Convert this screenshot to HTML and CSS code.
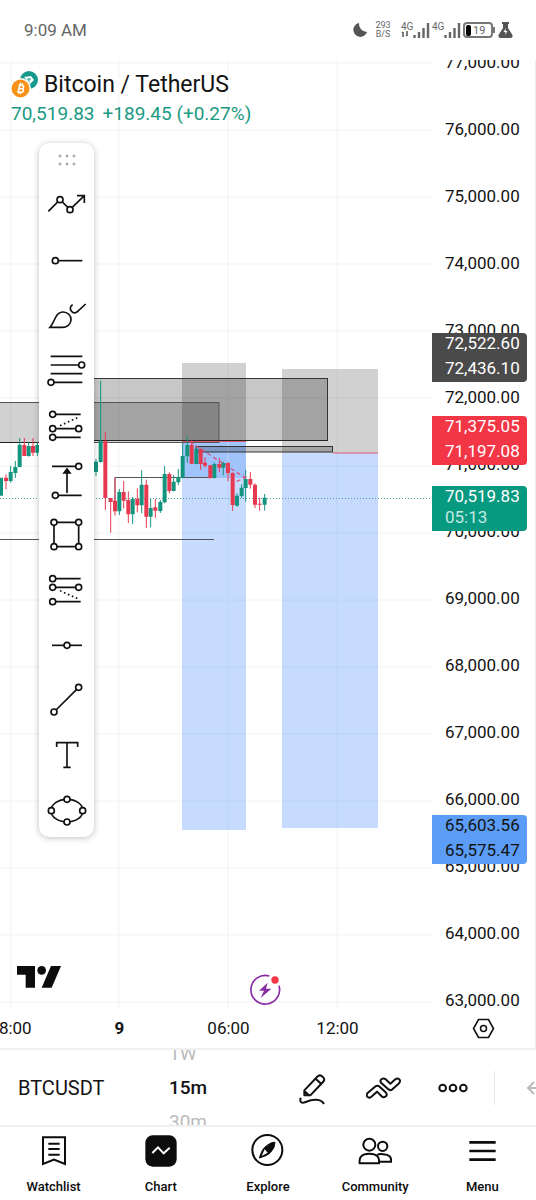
FILE: index.html
```
<!DOCTYPE html>
<html lang="en">
<head>
  <meta charset="UTF-8" />
  <meta name="viewport" content="width=device-width, initial-scale=1.0"/>
  <title>Bitcoin / TetherUS</title>
  <link rel="stylesheet" href="styles.css">
</head>
<body>

  <header class="status">
    <span class="clock">9:09 AM</span>
    <div class="status-icons">
      <svg class="moon" width="15" height="16" viewBox="0 0 15 16"><path d="M6 1A7 7 0 1 0 14 10 8 8 0 0 1 6 1Z" fill="#555"/></svg>
      <span class="speed">293<br>B/S</span>
      <div class="signal">
        <div class="net">4G<svg width="8" height="6" viewBox="0 0 8 6"><path d="M2 6V1M1 2L2 1M6 0V5M5 4L6 5" stroke="#555" stroke-width="1.500" fill="none"/></svg></div>
        <svg width="17" height="16" viewBox="0 0 17 16"><path d="M1.500 13V16M6 10V16M10.500 6V16M15 1V16" stroke="#666" stroke-width="2.400"/></svg>
      </div>
      <div class="signal">
        <div class="net">4G</div>
        <svg width="17" height="16" viewBox="0 0 17 16"><path d="M1.500 13V16M6 10V16M10.500 6V16M15 1V16" stroke="#666" stroke-width="2.400"/></svg>
      </div>
      <div class="battery"><i></i>19</div>
      <svg class="flask" width="15" height="16" viewBox="0 0 15 16"><path d="M4 0H11V2H10V6L14.500 13Q15 16 12.500 16H2.500Q0 16 .5 13L5 6V2H4Z" fill="#555"/><path d="M8 6L5.500 10H7.500L7 13L9.500 9H7.500Z" fill="#fff"/></svg>
    </div>
  </header>

  <main class="chart">
    <div class="plot">
      <svg class="candles" viewBox="0 60 432 948" preserveAspectRatio="none">
        <!-- grid -->
        <path class="grid" d="M0 63H432M0 130H432M0 197H432M0 264H432M0 331H432M0 398H432M0 466H432M0 533H432M0 600H432M0 667H432M0 734H432M0 801H432M0 868H432M0 935H432M0 1002H432M11 60V1008M119 60V1008M228 60V1008M337 60V1008"/>

        <!-- short positions -->
        <rect x="182" y="441" width="64" height="389" fill="#c6dbfd"/>
        <rect x="182" y="441" width="64" height="37" fill="#a0c3fb"/>
        <rect x="282" y="453" width="96" height="375" fill="#c6dbfd"/>
        <path class="grid shade" d="M182 533H246M182 600H246M182 667H246M182 734H246M182 801H246M282 466H378M282 533H378M282 600H378M282 667H378M282 734H378M282 801H378M228 441V830M337 453V828"/>
        <rect x="182" y="363" width="64" height="78" fill="#000" opacity=".18"/>
        <rect x="282" y="369" width="96" height="84" fill="#000" opacity=".18"/>

        <!-- supply zones -->
        <g class="zone">
          <rect x="60" y="378.500" width="267.500" height="62"/>
          <rect class="inner" x="-2" y="402.500" width="221" height="40"/>
          <rect x="196" y="446.500" width="136.500" height="5.500"/>
        </g>
        <path d="M0 442.500H94M60 440.500H327" stroke="#222"/>
        <path d="M182 441.500H246M333 453H378" stroke="#e0566a"/>
        <path d="M0 539.500H214M115 505V477.500H212" stroke="#555" fill="none"/>
        <path d="M0 498.500H432" stroke="#4aa39a" stroke-dasharray="1 2"/>

        <g transform="translate(0 360) scale(.3333)">
          <path class="up wick" d="M32 318V368M46 303V354M59 234V322M86 247V290M112 247V288"/>
          <path class="up body" d="M3 353V407M32 336V363M46 321V339M59 254V321M86 258V288M112 255V278"/>
          <path class="down wick" d="M18 343V388M73 234V288M99 234V288"/>
          <path class="down body" d="M18 353V363M73 255V288M99 258V278"/>
        </g>
        <g transform="translate(90 350) scale(.3333)">
          <path class="up wick" d="M18 327V378M32 92V338M88 417V495M128 441V522M155 361V490M182 446V532M211 450V489M224 348V460M251 375V424M265 357V405M278 278V385M292 257V338M319 292V343M373 337V386M400 335V376M441 430V470M455 403V444M467 359V455M524 432V482"/>
          <path class="up body" d="M18 335V366M32 274V336M88 426V484M128 446V493M155 404V466M182 474V500M211 456V483M224 372V457M251 395V423M265 382V397M278 318V383M292 285V319M319 297V342M373 342V384M400 339V353M441 437V467M455 413V438M467 387V414M524 443V464"/>
          <path class="down wick" d="M46 247V480M62 444V548M75 383V497M101 393V475M115 424V519M142 415V487M169 389V534M196 447V504M238 367V430M305 271V342M332 295V360M345 322V353M361 346V386M388 324V366M414 337V394M428 367V483M481 366V416M495 400V474M509 443V482"/>
          <path class="down body" d="M46 274V444M62 444V456M75 452V484M101 426V452M115 450V493M142 446V466M169 404V500M196 472V482M238 372V423M305 285V341M332 297V342M345 338V347M361 346V384M388 342V353M414 339V369M428 369V465M481 387V404M495 404V464M509 461V464"/>
          <path d="M300 275L360 315L465 383M440 394L468 382L460 372" stroke="#d9507a" stroke-width="4" stroke-dasharray="12 9" fill="none"/>
        </g>
      </svg>

      <div class="legend">
        <h1>
          <svg width="28" height="28" viewBox="0 0 28 28">
            <circle cx="18" cy="9" r="9" fill="#159a8c"/>
            <path d="M13 6L20 5L23 9L19 13Z" fill="#fff"/><path d="M16 8H20M18 8V11" stroke="#159a8c"/>
            <circle cx="9.500" cy="17.500" r="10.500" fill="#fff"/>
            <circle cx="9.500" cy="17.500" r="9" fill="#f7931a"/>
            <g transform="rotate(12 9.500 17.500)" stroke="#fff" stroke-width="1.500" fill="none"><path d="M7 14H10.500A1.700 1.700 0 0 1 10.500 17.500H7.500H11A1.700 1.700 0 0 1 11 21H7M8 14V21M8.500 12V14M10.500 12V14M8.500 21V23M10.500 21V23"/></g>
          </svg>
          Bitcoin / TetherUS
        </h1>
        <p><span>70,519.83</span><span>+189.45 (+0.27%)</span></p>
      </div>

      <svg class="brand" width="44" height="22" viewBox="0 0 132 66"><path d="M0 0H54V65H26V26H0ZM102 0H132L104 65H74Z" fill="#0c0c0c"/><circle cx="74" cy="13" r="13" fill="#0c0c0c"/></svg>
      <button class="flash" aria-label="Events">
        <svg width="32" height="32" viewBox="0 0 96 96"><path d="M61 6A43 43 0 1 0 90 35" stroke="#8a2da5" stroke-width="5" fill="none"/><path d="M56 26L30 50H45L35 72L67 44H51Z" fill="#8a2da5"/><circle cx="78" cy="18" r="11" fill="#f23645"/></svg>
      </button>
    </div>

    <div class="prices">
      <ul>
        <li>77,000.00</li>
        <li>76,000.00</li>
        <li>75,000.00</li>
        <li>74,000.00</li>
        <li>73,000.00</li>
        <li>72,000.00</li>
        <li>71,000.00</li>
        <li>70,000.00</li>
        <li>69,000.00</li>
        <li>68,000.00</li>
        <li>67,000.00</li>
        <li>66,000.00</li>
        <li>65,000.00</li>
        <li>64,000.00</li>
        <li>63,000.00</li>
      </ul>
      <div class="tag stop"><span>72,522.60</span><span>72,436.10</span></div>
      <div class="tag entry"><span>71,375.05</span><span>71,197.08</span></div>
      <div class="tag last"><span>70,519.83</span><span>05:13</span></div>
      <div class="tag target"><span>65,603.56</span><span>65,575.47</span></div>
    </div>

    <div class="times">
      <span>18:00</span>
      <span><b>9</b></span>
      <span>06:00</span>
      <span>12:00</span>
    </div>
    <button class="settings" aria-label="Chart settings">
      <svg width="23" height="21" viewBox="0 0 23 21"><path d="M6.500 1.500H16.500L21.500 10.500L16.500 19.500H6.500L1.500 10.500Z" fill="none" stroke="#111" stroke-width="1.600"/><circle cx="11.500" cy="10.500" r="3" fill="none" stroke="#111" stroke-width="1.500"/></svg>
    </button>

    <div class="toolbar">
      <div class="handle"><svg width="20" height="12" viewBox="0 0 20 12" fill="#aaa"><circle cx="3" cy="2" r="1.400"/><circle cx="10" cy="2" r="1.400"/><circle cx="17" cy="2" r="1.400"/><circle cx="3" cy="10" r="1.400"/><circle cx="10" cy="10" r="1.400"/><circle cx="17" cy="10" r="1.400"/></svg></div>
      <button aria-label="Trend arrow"><svg viewBox="0 0 165 165"><path d="M28 103L63 68L93 98L136 56M114 56H136V78"/><circle cx="63" cy="68" r="9"/><circle cx="93" cy="98" r="9"/></svg></button>
      <button aria-label="Horizontal ray"><svg viewBox="0 0 165 165"><path d="M49 86H130"/><circle cx="49" cy="86" r="9"/></svg></button>
      <button aria-label="Brush"><svg viewBox="0 0 165 165"><path d="M33 121C48 105 48 77 70 75C86 74 97 86 96 99C95 112 84 121 70 121ZM101 53C93 58 92 66 97 72C103 80 110 79 116 73L140 51"/></svg></button>
      <button aria-label="Fib retracement"><svg viewBox="0 0 165 165"><path d="M35 43H130M35 69H128M35 95H130M36 121H130"/><circle cx="128" cy="69" r="9"/><circle cx="36" cy="121" r="9"/></svg></button>
      <button aria-label="Long position"><svg viewBox="0 0 165 165"><path d="M41 52H125M41 95H119M41 121H125"/><path class="dots" d="M63 86L120 60"/><circle cx="41" cy="52" r="9"/><circle cx="41" cy="95" r="9"/><circle cx="119" cy="95" r="9"/><circle cx="41" cy="121" r="9"/></svg></button>
      <button aria-label="Price range"><svg viewBox="0 0 165 165"><path d="M39 43H119M49 130H128M84 123V56"/><path class="fill" d="M84 51L75 63H93Z"/><circle cx="119" cy="43" r="9"/><circle cx="49" cy="130" r="9"/></svg></button>
      <button aria-label="Rectangle"><svg viewBox="0 0 165 165"><path d="M45 46H119V119H45Z"/><circle cx="45" cy="46" r="9"/><circle cx="119" cy="46" r="9"/><circle cx="45" cy="119" r="9"/><circle cx="119" cy="119" r="9"/></svg></button>
      <button aria-label="Short position"><svg viewBox="0 0 165 165"><path d="M41 50H125M41 76H119M41 119H125"/><path class="dots" d="M63 86L120 112"/><circle cx="41" cy="50" r="9"/><circle cx="41" cy="76" r="9"/><circle cx="119" cy="76" r="9"/><circle cx="41" cy="119" r="9"/></svg></button>
      <button aria-label="Horizontal line"><svg viewBox="0 0 165 165"><path d="M39 85H129"/><circle cx="84" cy="85" r="9"/></svg></button>
      <button aria-label="Trend line"><svg viewBox="0 0 165 165"><path d="M45 120L119 46"/><circle cx="45" cy="120" r="9"/><circle cx="119" cy="46" r="9"/></svg></button>
      <button aria-label="Text"><svg viewBox="0 0 165 165"><path d="M53 60V47H116V60M84 47V121M73 121H95"/></svg></button>
      <button aria-label="Ellipse"><svg viewBox="0 0 165 165"><ellipse cx="84" cy="86" rx="48" ry="34"/><circle cx="37" cy="86" r="9"/><circle cx="84" cy="52" r="9"/><circle cx="131" cy="86" r="9"/><circle cx="84" cy="120" r="9"/></svg></button>
    </div>
  </main>

  <div class="controls">
    <button class="symbol">BTCUSDT</button>
    <div class="interval">
      <button>1W</button>
      <button class="current">15m</button>
      <button>30m</button>
    </div>
    <div class="tools">
      <button aria-label="Draw"><svg width="28" height="34" viewBox="0 0 84 102"><path d="M16 58L54 18Q62 9 71 17T72 33L34 73H16ZM50 23L67 39M16 60L32 74M5 80C1 94 8 98 20 93C43 83 66 83 75 99"/></svg></button>
      <button aria-label="Indicators"><svg width="35" height="22" viewBox="0 0 105 66"><path d="M4 49L27 29Q34 23 41 29L58 45Q67 54 58 59Q52 63 46 57L33 44L16 59Q9 65 4 59Q0 54 4 49ZM45 17Q41 10 47 6T59 7L73 20L88 7Q95 2 100 7T98 20L79 37Q72 42 66 36Z"/></svg></button>
      <button aria-label="More"><svg width="30" height="12" viewBox="0 0 90 36"><circle cx="14" cy="18" r="10"/><circle cx="45" cy="18" r="10"/><circle cx="76" cy="18" r="10"/></svg></button>
    </div>
    <button class="undo" aria-label="Undo"><svg width="20" height="14" viewBox="0 0 20 14"><path d="M9 1L3 7L9 13M3 7H20" fill="none" stroke="#bbb" stroke-width="2"/></svg></button>
  </div>

  <nav class="tabs">
    <a href="#"><svg viewBox="0 0 108 108"><path d="M21 13H87V93L54 80L21 93Z"/><path d="M37 32H71M37 48H71M37 65H71"/></svg>Watchlist</a>
    <a href="#"><svg viewBox="0 0 108 108"><rect x="7" y="7" width="94" height="94" rx="22" fill="#0c0c0c" stroke="none"/><path d="M28 60L45 43L62 61L80 44" stroke="#fff"/></svg>Chart</a>
    <a href="#"><svg viewBox="0 0 108 108"><circle cx="52" cy="51" r="45"/><path d="M75 28Q66 26 50 38Q37 45 28 75Q51 69 61 59Q75 45 75 28Z" fill="#0c0c0c" stroke-width="3"/><path d="M44 49L53 59L35 69Z" fill="#fff" stroke="none"/></svg>Explore</a>
    <a href="#"><svg viewBox="0 0 108 108"><circle cx="37" cy="35" r="18"/><circle cx="77" cy="40" r="14"/><path d="M8 91Q4 62 37 62T66 91ZM61 65Q70 62 79 64Q105 65 102 86H66"/></svg>Community</a>
    <a href="#"><svg viewBox="0 0 108 108"><path d="M16 28H95M16 54H95M16 80H95" stroke-width="8"/></svg>Menu</a>
  </nav>

</body>
</html>
```

FILE: styles.css
```
* {
  box-sizing: border-box;
}

body {
  display: flex;
  flex-direction: column;
  min-height: 100vh;
  margin: 0;
  background-color: #fff;
  color: #131313;
  font-family: Roboto, sans-serif;
  font-size: 17px;
}

button {
  padding: 0;
  border: none;
  background: none;
  color: inherit;
  font: inherit;
  cursor: pointer;
}

svg {
  display: block;
  flex: none;
}

/* status bar */
.status {
  display: flex;
  align-items: center;
  justify-content: space-between;
  height: 60px;
  padding: 0 23px 0 24px;
  color: #666;
}

.status-icons {
  display: flex;
  align-items: center;
}

.speed {
  width: 18px;
  margin: 0 9px 0 6px;
  font-size: 9px;
  line-height: 9px;
  text-align: center;
}

.signal {
  display: flex;
  align-items: flex-start;
  margin-right: 2px;
}

.net {
  width: 12px;
  height: 16px;
  font-size: 10px;
  line-height: 9px;
}

.battery {
  display: flex;
  align-items: center;
  position: relative;
  width: 30px;
  height: 16px;
  margin-right: 5px;
  padding: 1px;
  border: 2px solid #777;
  border-radius: 4px;
  font-size: 11px;
}

.battery i {
  width: 5px;
  height: 11px;
  margin-right: 2px;
  border-radius: 2px;
  background-color: #000;
}

.battery::after {
  content: "";
  position: absolute;
  top: 3px;
  right: -4px;
  width: 2px;
  height: 6px;
  background-color: #777;
}

/* chart */
.chart {
  display: grid;
  flex: 1;
  grid-template-columns: 1fr 103px;
  grid-template-rows: 1fr 40px;
  position: relative;
  overflow: hidden;
  border-right: 1px solid #eee;
}

.plot {
  position: relative;
  min-height: 948px;
}

.candles {
  position: absolute;
  width: 100%;
  height: 100%;
}

.grid {
  fill: none;
  stroke: #f3f3f3;
}

.shade {
  stroke: #bcd3f8;
}

.zone rect {
  fill: rgba(0, 0, 0, 0.22);
  stroke: #333;
}

.zone .inner {
  fill: rgba(0, 0, 0, 0.18);
  stroke: #555;
}

.wick {
  stroke-width: 3;
}

.body {
  stroke-width: 12;
}

.up {
  stroke: #13947f;
}

.down {
  stroke: #e63950;
}

.legend {
  position: absolute;
  top: 9px;
  left: 11px;
}

.legend h1 {
  display: flex;
  align-items: center;
  gap: 5px;
  margin: 0;
  font-size: 23px;
  font-weight: 400;
  line-height: 32px;
}

.legend p {
  display: flex;
  gap: 8px;
  margin: 3px 0;
  color: #1a9a82;
  font-size: 19px;
  line-height: 20px;
}

.brand {
  position: absolute;
  bottom: 20px;
  left: 17px;
}

.flash {
  position: absolute;
  bottom: 2px;
  left: 249px;
}

.prices {
  position: relative;
  overflow: hidden;
}

.prices ul {
  margin: -31px 0 0;
  padding: 0 0 0 13px;
  list-style: none;
}

.prices li {
  height: 67px;
  line-height: 67px;
}

.prices li:last-child {
  margin-bottom: -40px;
}

.tag {
  display: flex;
  flex-direction: column;
  gap: 5px;
  position: absolute;
  left: 0;
  width: 95px;
  height: 49px;
  padding-left: 13px;
  border-radius: 0 4px 4px 0;
  color: #fff;
  line-height: 20px;
}

.stop {
  top: 273px;
  background-color: #4a4a4a;
}

.entry {
  top: 356px;
  background-color: #f23645;
}

.last {
  gap: 1px;
  top: 426px;
  height: 45px;
  background-color: #089981;
}

.last span:last-child {
  color: #c3ebe2;
}

.target {
  top: 755px;
  background-color: #5b9cf6;
  color: #131313;
}

.times {
  display: flex;
  overflow: hidden;
}

.times span {
  flex: none;
  width: 109px;
  line-height: 40px;
  text-align: center;
}

.times span:first-child {
  margin-left: -44px;
}

.settings {
  justify-self: center;
}

/* drawing toolbar */
.toolbar {
  position: absolute;
  top: 83px;
  left: 39px;
  width: 55px;
  border-radius: 10px;
  background-color: #fff;
  box-shadow: 0 1px 6px rgba(0, 0, 0, 0.25);
}

.handle {
  display: flex;
  align-items: center;
  justify-content: center;
  height: 34px;
}

.toolbar button {
  display: block;
}

.toolbar button svg {
  width: 55px;
  height: 55px;
  fill: #fff;
  stroke: #111;
  stroke-width: 5;
}

.toolbar path {
  fill: none;
}

.toolbar .dots {
  stroke-dasharray: 5 8;
}

.toolbar .fill {
  fill: #111;
}

/* symbol and interval row */
.controls {
  display: flex;
  align-items: center;
  height: 77px;
  overflow: hidden;
  border-top: 2px solid #f0f0f0;
  padding-left: 18px;
}

.symbol {
  width: 122px;
  font-size: 20px;
  text-align: left;
}

.interval {
  display: flex;
  flex-direction: column;
  justify-content: center;
  width: 96px;
  height: 75px;
  padding-left: 29px;
  overflow: hidden;
}

.interval button {
  flex: none;
  height: 34px;
  color: #bbb;
  font-size: 19px;
  text-align: left;
}

.interval .current {
  color: #131313;
  font-weight: 500;
}

.tools {
  display: flex;
  margin-left: auto;
}

.tools button {
  display: flex;
  align-items: center;
  justify-content: center;
  width: 70px;
  height: 44px;
}

.tools svg {
  fill: none;
  stroke: #111;
  stroke-width: 6;
  stroke-linejoin: round;
}

.undo {
  width: 42px;
  height: 34px;
  margin-left: 6px;
  padding-left: 30px;
  border-left: 1px solid #e5e5e5;
}

/* bottom navigation */
.tabs {
  display: grid;
  grid-template-columns: repeat(5, 1fr);
  height: 75px;
  border-top: 2px solid #f0f0f0;
}

.tabs a {
  display: flex;
  flex-direction: column;
  align-items: center;
  gap: 10px;
  padding-top: 6px;
  color: #0c0c0c;
  font-size: 13px;
  font-weight: 500;
  text-decoration: none;
}

.tabs svg {
  width: 36px;
  height: 36px;
  fill: none;
  stroke: #0c0c0c;
  stroke-width: 6;
}
```
